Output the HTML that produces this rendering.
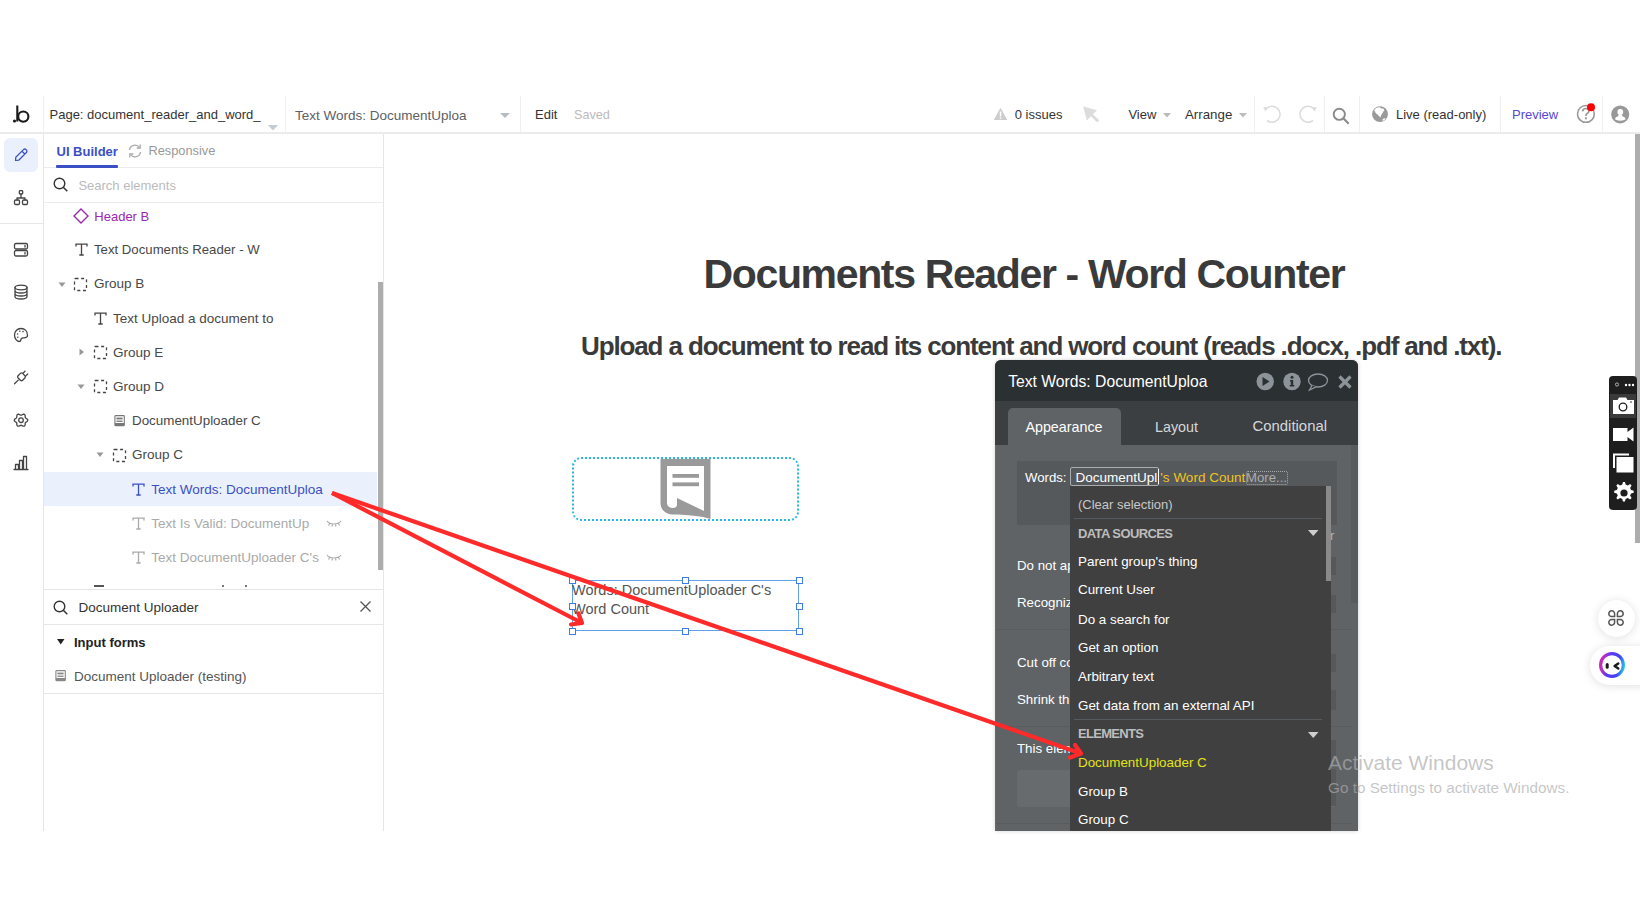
<!DOCTYPE html><html><head><meta charset="utf-8"><style>
html,body{margin:0;padding:0;background:#fff;width:1640px;height:924px;overflow:hidden;position:relative;font-family:"Liberation Sans",sans-serif}
.t{position:absolute;white-space:nowrap}
.r{position:absolute;display:block}
</style></head><body>
<div class="r" style="left:0px;top:132px;width:1640px;height:2px;background:#ebebeb;"></div>
<div class="r" style="left:43px;top:96px;width:1px;height:36px;background:#eef0f3;"></div>
<div class="r" style="left:285px;top:96px;width:1px;height:36px;background:#eef0f3;"></div>
<div class="r" style="left:520px;top:96px;width:1px;height:36px;background:#eef0f3;"></div>
<div class="r" style="left:1254px;top:96px;width:1px;height:36px;background:#eef0f3;"></div>
<div class="r" style="left:1324px;top:96px;width:1px;height:36px;background:#eef0f3;"></div>
<div class="r" style="left:1359px;top:96px;width:1px;height:36px;background:#eef0f3;"></div>
<div class="r" style="left:1500px;top:96px;width:1px;height:36px;background:#eef0f3;"></div>
<div class="r" style="left:1602px;top:96px;width:1px;height:36px;background:#eef0f3;"></div>
<svg class="r" style="left:10px;top:102px;" width="24" height="24" viewBox="0 0 24 24"><circle cx="4.5" cy="19" r="1.6" fill="#1a1a1a"/><path d="M7.3 3.5 V19.5" stroke="#1a1a1a" stroke-width="2.1"/><circle cx="13.3" cy="14.6" r="5.1" fill="none" stroke="#1a1a1a" stroke-width="2.1"/></svg>
<div class="t" style="left:49.5px;top:108.19px;font-size:13px;line-height:13px;color:#333;font-weight:400;letter-spacing:0px;">Page: document_reader_and_word_</div>
<svg class="r" style="left:268px;top:125px;" width="10" height="6" viewBox="0 0 10 6"><path d="M0 0 H10 L5 5.5Z" fill="#c3cbd3"/></svg>
<div class="t" style="left:295px;top:108.97px;font-size:13.5px;line-height:13.5px;color:#5d6165;font-weight:400;letter-spacing:0px;">Text Words: DocumentUploa</div>
<svg class="r" style="left:500px;top:113px;" width="10" height="6" viewBox="0 0 10 6"><path d="M0 0 H10 L5 5Z" fill="#b5bcc4"/></svg>
<div class="t" style="left:535px;top:108.49px;font-size:13px;line-height:13px;color:#333;font-weight:400;letter-spacing:0px;">Edit</div>
<div class="t" style="left:574px;top:108.83px;font-size:12.6px;line-height:12.6px;color:#bbb;font-weight:400;letter-spacing:0px;">Saved</div>
<svg class="r" style="left:993px;top:107px;" width="15" height="14" viewBox="0 0 15 14"><path d="M7.5 0.8 L14.3 13 H0.7Z" fill="#cdcdcd"/><rect x="6.8" y="4.5" width="1.5" height="5" fill="#fff"/><rect x="6.8" y="10.5" width="1.5" height="1.5" fill="#fff"/></svg>
<div class="t" style="left:1014.7px;top:108.29px;font-size:13px;line-height:13px;color:#333;font-weight:400;letter-spacing:0px;">0 issues</div>
<svg class="r" style="left:1083px;top:106px;" width="17" height="17" viewBox="0 0 17 17"><path d="M0.5 0.8 L13.6 4.6 L9.6 8.3 L15.9 14.3 L14 16.1 L7.8 10 L4 14 Z" fill="#dcdcdc" stroke="#dcdcdc" stroke-width="0.6" stroke-linejoin="round"/></svg>
<div class="t" style="left:1128.4px;top:108.29px;font-size:13px;line-height:13px;color:#333;font-weight:400;letter-spacing:0px;">View</div>
<svg class="r" style="left:1163px;top:113px;" width="8" height="5" viewBox="0 0 8 5"><path d="M0 0 H8 L4 4.5Z" fill="#bbb"/></svg>
<div class="t" style="left:1185px;top:108.04px;font-size:13.3px;line-height:13.3px;color:#333;font-weight:400;letter-spacing:0px;">Arrange</div>
<svg class="r" style="left:1239px;top:113px;" width="8" height="5" viewBox="0 0 8 5"><path d="M0 0 H8 L4 4.5Z" fill="#bbb"/></svg>
<svg class="r" style="left:1262px;top:104px;" width="22" height="20" viewBox="0 0 22 20"><path d="M3.96 4.95 A8 8 0 1 1 5.07 16.5" fill="none" stroke="#dcdcdc" stroke-width="1.6"/><path d="M1.2 3 L6.2 3.6 L3.4 7.6Z" fill="#dcdcdc"/></svg>
<svg class="r" style="left:1296px;top:104px;" width="22" height="20" viewBox="0 0 22 20"><path d="M18.04 4.95 A8 8 0 1 0 16.93 16.5" fill="none" stroke="#dcdcdc" stroke-width="1.6"/><path d="M20.8 3 L15.8 3.6 L18.6 7.6Z" fill="#dcdcdc"/></svg>
<svg class="r" style="left:1332px;top:106.5px;" width="19" height="18" viewBox="0 0 19 18"><circle cx="7.3" cy="7.3" r="5.6" fill="none" stroke="#8a8a8a" stroke-width="1.9"/><path d="M11.3 11.3 L16.7 16.7" stroke="#8a8a8a" stroke-width="2.1"/></svg>
<svg class="r" style="left:1371px;top:105px;" width="18" height="18" viewBox="0 0 18 18"><circle cx="9" cy="9.2" r="7.9" fill="#9a9a9a"/><path d="M3.2 5 C4.5 3 6.5 2 9 2.2 C9.6 3.2 10.5 4 11 3.2 C12.5 3.5 13.3 4.5 13.4 5.2 C12.5 6 12 7.5 11.2 8.5 C10.5 9.5 9.8 11 9.5 12.5 C8.5 11.5 7.5 10.5 6.5 9.5 C5 8.5 3.8 7 3.2 5Z M11.5 14.5 C12.5 13.3 13.8 13 14.5 13.5 C14 14.5 13 15.5 11.8 16 Z" fill="#fff"/></svg>
<div class="t" style="left:1396px;top:108.29px;font-size:13px;line-height:13px;color:#333;font-weight:400;letter-spacing:0px;">Live (read-only)</div>
<div class="t" style="left:1512px;top:108.29px;font-size:13px;line-height:13px;color:#5548d9;font-weight:400;letter-spacing:0px;">Preview</div>
<svg class="r" style="left:1575px;top:102px;" width="24" height="24" viewBox="0 0 24 24"><circle cx="10.9" cy="11.9" r="8.4" fill="none" stroke="#999" stroke-width="1.6"/><path d="M7.6 9.3 C7.8 7.3 9.2 6.5 10.8 6.5 C12.6 6.5 13.9 7.6 13.9 9.1 C13.9 10.6 12.7 11.2 11.8 11.8 C11.1 12.3 10.9 12.8 10.9 14" fill="none" stroke="#999" stroke-width="1.7"/><rect x="9.9" y="15.3" width="2" height="2" fill="#999"/><circle cx="16" cy="5.3" r="4" fill="#ff0000"/></svg>
<svg class="r" style="left:1610px;top:104px;" width="20" height="20" viewBox="0 0 20 20"><circle cx="10.2" cy="10.4" r="9" fill="#999"/><circle cx="10.3" cy="8" r="2.9" fill="#fff"/><path d="M10.3 10 C8.5 10 8.5 11.5 8.2 12.2 C6.5 12.7 5.2 13.5 5 15.3 C6.5 17.2 14 17.2 15.6 15.3 C15.4 13.5 14 12.7 12.4 12.2 C12.1 11.5 12 10 10.3 10Z" fill="#fff"/></svg>
<div class="r" style="left:1635px;top:134px;width:5px;height:409px;background:#adadad;"></div>
<div class="r" style="left:43px;top:134px;width:1px;height:697px;background:#e6e6e6;"></div>
<div class="r" style="left:0px;top:223px;width:43px;height:1px;background:#e6e6e6;"></div>
<div class="r" style="left:4px;top:138px;width:34px;height:34px;background:#eaf1fd;border-radius:6px;"></div>
<svg class="r" style="left:13px;top:147px;" width="16" height="16" viewBox="0 0 16 16"><path d="M2.5 13.5 L2.8 10.3 L10.5 2.6 C11.2 1.9 12.3 1.9 13 2.6 L13.4 3 C14.1 3.7 14.1 4.8 13.4 5.5 L5.7 13.2 Z M9 4.2 L11.8 7" fill="none" stroke="#3b4fc4" stroke-width="1.25" stroke-linejoin="round"/></svg>
<svg class="r" style="left:13px;top:190px;" width="16" height="16" viewBox="0 0 16 16"><rect x="6.3" y="0.6" width="3.4" height="3.4" rx="1.1" fill="none" stroke="#444" stroke-width="1.3" stroke-linecap="round" stroke-linejoin="round"/><path d="M8 3.8 V7 M4 10 V8 H12 V10" fill="none" stroke="#444" stroke-width="1.3" stroke-linecap="round" stroke-linejoin="round"/><rect x="1.5" y="10" width="5" height="4.5" rx="1.2" fill="none" stroke="#444" stroke-width="1.3" stroke-linecap="round" stroke-linejoin="round"/><rect x="9.5" y="10" width="5" height="4.5" rx="1.2" fill="none" stroke="#444" stroke-width="1.3" stroke-linecap="round" stroke-linejoin="round"/></svg>
<svg class="r" style="left:13px;top:242px;" width="16" height="16" viewBox="0 0 16 16"><rect x="1.5" y="1.5" width="13" height="5.5" rx="1.5" fill="none" stroke="#444" stroke-width="1.3" stroke-linecap="round" stroke-linejoin="round"/><rect x="1.5" y="8.5" width="13" height="5.5" rx="1.5" fill="none" stroke="#444" stroke-width="1.3" stroke-linecap="round" stroke-linejoin="round"/><path d="M12 3.5 V5 M12 10.5 V12" fill="none" stroke="#444" stroke-width="1.3" stroke-linecap="round" stroke-linejoin="round"/></svg>
<svg class="r" style="left:13px;top:284px;" width="16" height="16" viewBox="0 0 16 16"><ellipse cx="8" cy="3.5" rx="6" ry="2.3" fill="none" stroke="#444" stroke-width="1.3" stroke-linecap="round" stroke-linejoin="round"/><path d="M2 3.5 V12.5 C2 14 5 15 8 15 C11 15 14 14 14 12.5 V3.5 M2 6.5 C2 8 5 9 8 9 C11 9 14 8 14 6.5 M2 9.5 C2 11 5 12 8 12 C11 12 14 11 14 9.5" fill="none" stroke="#444" stroke-width="1.3" stroke-linecap="round" stroke-linejoin="round"/></svg>
<svg class="r" style="left:13px;top:327px;" width="16" height="16" viewBox="0 0 16 16"><path d="M8 1.5 C4 1.5 1.5 4.5 1.5 8 C1.5 11.5 4 14.5 6.5 14.5 C8 14.5 7.5 12.5 8.5 11.5 C9.5 10.5 14.5 11.5 14.5 8.5 C14.5 4.5 12 1.5 8 1.5Z" fill="none" stroke="#444" stroke-width="1.3" stroke-linecap="round" stroke-linejoin="round"/><circle cx="4.6" cy="7" r="0.8" fill="#444"/><circle cx="6.8" cy="4.3" r="0.8" fill="#444"/><circle cx="10" cy="4.6" r="0.8" fill="#444"/><circle cx="4.8" cy="10.2" r="0.8" fill="#444"/></svg>
<svg class="r" style="left:13px;top:369px;" width="16" height="16" viewBox="0 0 16 16"><path d="M1.5 14.8 L5.2 11.1" fill="none" stroke="#444" stroke-width="1.3" stroke-linecap="round" stroke-linejoin="round"/><rect x="5.3" y="4.6" width="6.4" height="6.4" rx="1.6" transform="rotate(45 8.5 7.8)" fill="none" stroke="#444" stroke-width="1.3" stroke-linecap="round" stroke-linejoin="round"/><path d="M9.9 4.4 L12 2.3 M12.6 7.1 L14.7 5" fill="none" stroke="#444" stroke-width="1.3" stroke-linecap="round" stroke-linejoin="round"/></svg>
<svg class="r" style="left:13px;top:412px;" width="16" height="16" viewBox="0 0 16 16"><path d="M14.75 8.20 L14.61 8.78 L14.23 9.30 L13.70 9.73 L13.14 10.07 L12.68 10.38 L12.37 10.72 L12.23 11.16 L12.19 11.72 L12.17 12.37 L12.07 13.05 L11.81 13.64 L11.38 14.05 L10.80 14.21 L10.16 14.14 L9.53 13.90 L8.95 13.59 L8.45 13.34 L8.00 13.25 L7.55 13.34 L7.05 13.59 L6.47 13.90 L5.84 14.14 L5.20 14.21 L4.63 14.05 L4.19 13.64 L3.93 13.05 L3.83 12.37 L3.81 11.72 L3.77 11.16 L3.63 10.73 L3.32 10.38 L2.86 10.07 L2.30 9.73 L1.77 9.30 L1.39 8.78 L1.25 8.20 L1.39 7.62 L1.77 7.10 L2.30 6.67 L2.86 6.33 L3.32 6.02 L3.63 5.67 L3.77 5.24 L3.81 4.68 L3.83 4.03 L3.93 3.35 L4.19 2.76 L4.62 2.35 L5.20 2.19 L5.84 2.26 L6.47 2.50 L7.05 2.81 L7.55 3.06 L8.00 3.15 L8.45 3.06 L8.95 2.81 L9.53 2.50 L10.16 2.26 L10.80 2.19 L11.37 2.35 L11.81 2.76 L12.07 3.35 L12.17 4.03 L12.19 4.68 L12.23 5.24 L12.37 5.68 L12.68 6.02 L13.14 6.33 L13.70 6.67 L14.23 7.10 L14.61 7.62Z" fill="none" stroke="#444" stroke-width="1.3" stroke-linecap="round" stroke-linejoin="round"/><circle cx="8" cy="8.2" r="2.3" fill="none" stroke="#444" stroke-width="1.3" stroke-linecap="round" stroke-linejoin="round"/></svg>
<svg class="r" style="left:13px;top:455px;" width="16" height="16" viewBox="0 0 16 16"><path d="M1 14.5 H15 M2.5 14.5 V9.5 H5.5 V14.5 M6.5 14.5 V5.5 H9.5 V14.5 M10.5 14.5 V1.5 H13.5 V14.5" fill="none" stroke="#444" stroke-width="1.3" stroke-linecap="round" stroke-linejoin="round"/></svg>
<div class="r" style="left:383px;top:134px;width:1px;height:697px;background:#e6e6e6;"></div>
<div class="r" style="left:44px;top:167px;width:339px;height:1px;background:#ececec;"></div>
<div class="t" style="left:56.5px;top:144.59px;font-size:13px;line-height:13px;color:#3b4fc4;font-weight:700;letter-spacing:0px;">UI Builder</div>
<div class="r" style="left:56px;top:165px;width:62px;height:3px;background:#3b4fc4;border-radius:1px;"></div>
<svg class="r" style="left:127px;top:143px;" width="16" height="16" viewBox="0 0 16 16"><path d="M2.5 7 A5.5 5.5 0 0 1 12.5 4.5 M13.5 9 A5.5 5.5 0 0 1 3.5 11.5" fill="none" stroke="#aaa" stroke-width="1.3"/><path d="M13.2 1.5 V5 H9.7 M2.8 14.5 V11 H6.3" fill="none" stroke="#aaa" stroke-width="1.3"/></svg>
<div class="t" style="left:148.5px;top:144.76px;font-size:12.8px;line-height:12.8px;color:#999;font-weight:400;letter-spacing:0px;">Responsive</div>
<div class="r" style="left:44px;top:202px;width:339px;height:1px;background:#ececec;"></div>
<svg class="r" style="left:53px;top:177px;" width="16" height="16" viewBox="0 0 16 16"><circle cx="6.5" cy="6.5" r="5.3" fill="none" stroke="#333" stroke-width="1.4"/><path d="M10.3 10.3 L14.3 14.3" stroke="#333" stroke-width="1.5"/></svg>
<div class="t" style="left:78.4px;top:178.69px;font-size:13px;line-height:13px;color:#bbb;font-weight:400;letter-spacing:0px;">Search elements</div>
<div class="r" style="left:44px;top:472px;width:333px;height:34px;background:#eaf1fd;"></div>
<svg class="r" style="left:73px;top:208px;" width="16" height="16" viewBox="0 0 16 16"><path d="M8 1 L15 8 L8 15 L1 8Z" fill="none" stroke="#9c27b0" stroke-width="1.4"/></svg>
<div class="t" style="left:94.3px;top:209.59px;font-size:13px;line-height:13px;color:#9c27b0;font-weight:400;letter-spacing:0px;">Header B</div>
<svg class="r" style="left:75px;top:243px;" width="13" height="13" viewBox="0 0 13 13"><path d="M1 3.5 V1.2 H12 V3.5 M6.5 1.2 V12 M4.3 12 H8.7" fill="none" stroke="#444" stroke-width="1.3"/></svg>
<div class="t" style="left:94px;top:243.32px;font-size:13.2px;line-height:13.2px;color:#484848;font-weight:400;letter-spacing:0px;">Text Documents Reader - W</div>
<svg class="r" style="left:57.5px;top:281.5px;" width="8" height="6" viewBox="0 0 8 6"><path d="M0.5 0.5 H7.5 L4 5Z" fill="#999"/></svg>
<svg class="r" style="left:73px;top:277px;" width="15" height="15" viewBox="0 0 15 15"><rect x="1.5" y="1.5" width="12" height="12" rx="1" fill="none" stroke="#444" stroke-width="1.3" stroke-dasharray="3 2.6"/></svg>
<div class="t" style="left:94px;top:277.07px;font-size:13.5px;line-height:13.5px;color:#484848;font-weight:400;letter-spacing:0px;">Group B</div>
<svg class="r" style="left:94px;top:311.5px;" width="13" height="13" viewBox="0 0 13 13"><path d="M1 3.5 V1.2 H12 V3.5 M6.5 1.2 V12 M4.3 12 H8.7" fill="none" stroke="#444" stroke-width="1.3"/></svg>
<div class="t" style="left:113px;top:311.77px;font-size:13.5px;line-height:13.5px;color:#484848;font-weight:400;letter-spacing:0px;">Text Upload a document to</div>
<svg class="r" style="left:78.5px;top:348px;" width="6" height="8" viewBox="0 0 6 8"><path d="M0.5 0.5 V7.5 L5 4Z" fill="#999"/></svg>
<svg class="r" style="left:92.5px;top:345px;" width="15" height="15" viewBox="0 0 15 15"><rect x="1.5" y="1.5" width="12" height="12" rx="1" fill="none" stroke="#444" stroke-width="1.3" stroke-dasharray="3 2.6"/></svg>
<div class="t" style="left:113px;top:345.57px;font-size:13.5px;line-height:13.5px;color:#484848;font-weight:400;letter-spacing:0px;">Group E</div>
<svg class="r" style="left:77px;top:383.5px;" width="8" height="6" viewBox="0 0 8 6"><path d="M0.5 0.5 H7.5 L4 5Z" fill="#999"/></svg>
<svg class="r" style="left:92.5px;top:379px;" width="15" height="15" viewBox="0 0 15 15"><rect x="1.5" y="1.5" width="12" height="12" rx="1" fill="none" stroke="#444" stroke-width="1.3" stroke-dasharray="3 2.6"/></svg>
<div class="t" style="left:113px;top:379.57px;font-size:13.5px;line-height:13.5px;color:#484848;font-weight:400;letter-spacing:0px;">Group D</div>
<svg class="r" style="left:114px;top:415px;" width="12" height="12" viewBox="0 0 12 12"><rect x="0.9" y="0.6" width="9.4" height="10" rx="0.6" fill="none" stroke="#777" stroke-width="1.1"/><rect x="2.4" y="2.6" width="6.2" height="1.8" fill="#777"/><rect x="2.4" y="5.6" width="6.2" height="1.3" fill="#777"/><rect x="1" y="8" width="9.2" height="2.6" fill="#777"/></svg>
<div class="t" style="left:132px;top:413.85px;font-size:13.4px;line-height:13.4px;color:#484848;font-weight:400;letter-spacing:0px;">DocumentUploader C</div>
<svg class="r" style="left:96px;top:451.5px;" width="8" height="6" viewBox="0 0 8 6"><path d="M0.5 0.5 H7.5 L4 5Z" fill="#999"/></svg>
<svg class="r" style="left:112px;top:447.5px;" width="15" height="15" viewBox="0 0 15 15"><rect x="1.5" y="1.5" width="12" height="12" rx="1" fill="none" stroke="#444" stroke-width="1.3" stroke-dasharray="3 2.6"/></svg>
<div class="t" style="left:132px;top:447.87px;font-size:13.5px;line-height:13.5px;color:#484848;font-weight:400;letter-spacing:0px;">Group C</div>
<svg class="r" style="left:132px;top:482.5px;" width="13" height="13" viewBox="0 0 13 13"><path d="M1 3.5 V1.2 H12 V3.5 M6.5 1.2 V12 M4.3 12 H8.7" fill="none" stroke="#3b4fc4" stroke-width="1.3"/></svg>
<div class="t" style="left:151.3px;top:482.57px;font-size:13.5px;line-height:13.5px;color:#3b4fc4;font-weight:400;letter-spacing:0px;">Text Words: DocumentUploa</div>
<svg class="r" style="left:132px;top:516.5px;" width="13" height="13" viewBox="0 0 13 13"><path d="M1 3.5 V1.2 H12 V3.5 M6.5 1.2 V12 M4.3 12 H8.7" fill="none" stroke="#aaa" stroke-width="1.3"/></svg>
<div class="t" style="left:151.3px;top:516.57px;font-size:13.5px;line-height:13.5px;color:#aaa;font-weight:400;letter-spacing:0px;">Text Is Valid: DocumentUp</div>
<svg class="r" style="left:326px;top:519px;" width="16" height="8" viewBox="0 0 16 8"><path d="M1 2 C4 6 12 6 15 2 M3.5 4.5 L2.5 6.5 M6.5 5.5 L6 7.5 M9.5 5.5 L10 7.5 M12.5 4.5 L13.5 6.5" fill="none" stroke="#aaa" stroke-width="1.1"/></svg>
<svg class="r" style="left:132px;top:550.5px;" width="13" height="13" viewBox="0 0 13 13"><path d="M1 3.5 V1.2 H12 V3.5 M6.5 1.2 V12 M4.3 12 H8.7" fill="none" stroke="#aaa" stroke-width="1.3"/></svg>
<div class="t" style="left:151.3px;top:550.57px;font-size:13.5px;line-height:13.5px;color:#aaa;font-weight:400;letter-spacing:0px;">Text DocumentUploader C&#39;s</div>
<svg class="r" style="left:326px;top:553px;" width="16" height="8" viewBox="0 0 16 8"><path d="M1 2 C4 6 12 6 15 2 M3.5 4.5 L2.5 6.5 M6.5 5.5 L6 7.5 M9.5 5.5 L10 7.5 M12.5 4.5 L13.5 6.5" fill="none" stroke="#aaa" stroke-width="1.1"/></svg>
<div class="r" style="left:94px;top:585px;width:10px;height:2px;background:#555;"></div>
<div class="r" style="left:222px;top:585px;width:1.5px;height:2px;background:#777;"></div>
<div class="r" style="left:245px;top:585px;width:1.5px;height:2px;background:#777;"></div>
<div class="r" style="left:378px;top:282px;width:5px;height:288px;background:#adadad;"></div>
<div class="r" style="left:44px;top:589px;width:339px;height:1px;background:#e6e6e6;"></div>
<svg class="r" style="left:53px;top:600px;" width="16" height="16" viewBox="0 0 16 16"><circle cx="6.5" cy="6.5" r="5.3" fill="none" stroke="#333" stroke-width="1.4"/><path d="M10.3 10.3 L14.3 14.3" stroke="#333" stroke-width="1.5"/></svg>
<div class="t" style="left:78.4px;top:600.97px;font-size:13.5px;line-height:13.5px;color:#333;font-weight:400;letter-spacing:0px;">Document Uploader</div>
<svg class="r" style="left:359px;top:600px;" width="13" height="13" viewBox="0 0 13 13"><path d="M1.5 1.5 L11.5 11.5 M11.5 1.5 L1.5 11.5" stroke="#555" stroke-width="1.3"/></svg>
<div class="r" style="left:44px;top:624px;width:339px;height:1px;background:#e6e6e6;"></div>
<svg class="r" style="left:57px;top:639px;" width="8" height="6" viewBox="0 0 8 6"><path d="M0 0 H7.5 L3.75 5.5Z" fill="#222"/></svg>
<div class="t" style="left:74px;top:636.49px;font-size:13px;line-height:13px;color:#222;font-weight:700;letter-spacing:0px;">Input forms</div>
<svg class="r" style="left:55px;top:670px;" width="12" height="12" viewBox="0 0 12 12"><rect x="0.9" y="0.6" width="9.4" height="10" rx="0.6" fill="none" stroke="#888" stroke-width="1.1"/><rect x="2.4" y="2.6" width="6.2" height="1.8" fill="#888"/><rect x="2.4" y="5.6" width="6.2" height="1.3" fill="#888"/><rect x="1" y="8" width="9.2" height="2.6" fill="#888"/></svg>
<div class="t" style="left:74px;top:670.17px;font-size:13.5px;line-height:13.5px;color:#555;font-weight:400;letter-spacing:0px;">Document Uploader (testing)</div>
<div class="r" style="left:44px;top:693px;width:339px;height:1px;background:#e6e6e6;"></div>
<div class="t" style="left:703.5px;top:254.29px;font-size:41px;line-height:41px;color:#3a3a3a;font-weight:700;letter-spacing:-1.35px;">Documents Reader - Word Counter</div>
<div class="t" style="left:581px;top:332.79px;font-size:26px;line-height:26px;color:#3a3a3a;font-weight:700;letter-spacing:-1.125px;">Upload a document to read its content and word count (reads .docx, .pdf and .txt).</div>
<div class="r" style="left:572px;top:457px;width:227px;height:64px;background:transparent;box-sizing:border-box;border:2px dotted #29b6e0;border-radius:9px;"></div>
<svg class="r" style="left:659px;top:458px;" width="54" height="62" viewBox="0 0 54 62"><path d="M1.5 1 H51.5 V61 L44 59 C30 57 20 56.5 14 56.5 C7 56.5 1.5 52 1.5 45Z" fill="#9a9a9a"/><path d="M8 8 H45 V53 L18 40 V47 C18 51 9 51 8 46Z" fill="#fff"/><rect x="13.5" y="16" width="26.5" height="3.8" fill="#9a9a9a"/><rect x="13.5" y="24.4" width="26.5" height="3.8" fill="#9a9a9a"/></svg>
<div class="r" style="left:572px;top:580px;width:227px;height:51px;background:transparent;box-sizing:border-box;border:1px solid #62a0ea;"></div>
<div class="t" style="left:572px;top:583.42px;font-size:14.5px;line-height:14.5px;color:#555;font-weight:400;letter-spacing:0px;">Words: DocumentUploader C&#39;s</div>
<div class="t" style="left:572px;top:601.72px;font-size:14.5px;line-height:14.5px;color:#555;font-weight:400;letter-spacing:0px;">Word Count</div>
<div class="r" style="left:568.5px;top:576.5px;width:7px;height:7px;background:#fff;box-sizing:border-box;border:1.3px solid #3d7de8;"></div>
<div class="r" style="left:568.5px;top:627.5px;width:7px;height:7px;background:#fff;box-sizing:border-box;border:1.3px solid #3d7de8;"></div>
<div class="r" style="left:682.0px;top:576.5px;width:7px;height:7px;background:#fff;box-sizing:border-box;border:1.3px solid #3d7de8;"></div>
<div class="r" style="left:682.0px;top:627.5px;width:7px;height:7px;background:#fff;box-sizing:border-box;border:1.3px solid #3d7de8;"></div>
<div class="r" style="left:795.5px;top:576.5px;width:7px;height:7px;background:#fff;box-sizing:border-box;border:1.3px solid #3d7de8;"></div>
<div class="r" style="left:795.5px;top:627.5px;width:7px;height:7px;background:#fff;box-sizing:border-box;border:1.3px solid #3d7de8;"></div>
<div class="r" style="left:568.5px;top:602.5px;width:7px;height:7px;background:#fff;box-sizing:border-box;border:1.3px solid #3d7de8;"></div>
<div class="r" style="left:795.5px;top:602.5px;width:7px;height:7px;background:#fff;box-sizing:border-box;border:1.3px solid #3d7de8;"></div>
<div class="r" style="left:995px;top:360px;width:363px;height:471px;background:#5f6366;border-radius:6px 6px 0 0;overflow:hidden;box-shadow:0 0 4px rgba(0,0,0,0.18)">
<div class="r" style="left:0px;top:0px;width:363px;height:41px;background:#2b3033;"></div>
<div class="r" style="left:0px;top:41px;width:363px;height:44px;background:#3b3f42;"></div>
<div class="r" style="left:13px;top:48px;width:113px;height:37px;background:#5f6366;border-radius:5px 5px 0 0;"></div>
<div class="r" style="left:356px;top:85px;width:7px;height:158px;background:#575b5e;"></div>
<div class="r" style="left:22px;top:101px;width:320px;height:64px;background:#55595c;"></div>
</div>
<div class="t" style="left:1008.2px;top:373.71px;font-size:15.7px;line-height:15.7px;color:#fff;font-weight:400;letter-spacing:0px;">Text Words: DocumentUploa</div>
<svg class="r" style="left:1256px;top:372px;" width="19" height="19" viewBox="0 0 19 19"><circle cx="9.2" cy="9.5" r="8.7" fill="#8c9399"/><path d="M6.5 5 L13.5 9.5 L6.5 14Z" fill="#2b3033"/></svg>
<svg class="r" style="left:1283px;top:372px;" width="19" height="19" viewBox="0 0 19 19"><circle cx="9" cy="9.5" r="8.7" fill="#8c9399"/><circle cx="9" cy="5.3" r="1.5" fill="#2b3033"/><path d="M7 8 H10.2 V13 H11.3 V14.5 H6.7 V13 H7.8 V9.5 H7Z" fill="#2b3033"/></svg>
<svg class="r" style="left:1307px;top:372px;" width="22" height="20" viewBox="0 0 22 20"><ellipse cx="11" cy="8.5" rx="9.5" ry="6.5" fill="none" stroke="#8c9399" stroke-width="1.3"/><path d="M5 13.5 L2.5 18 L9 14.8" fill="#2b3033" stroke="#8c9399" stroke-width="1.3"/></svg>
<svg class="r" style="left:1337px;top:374px;" width="16" height="16" viewBox="0 0 16 16"><path d="M2.5 2.5 L13.5 13.5 M13.5 2.5 L2.5 13.5" stroke="#8c9399" stroke-width="3.2"/></svg>
<div class="t" style="left:1025.4px;top:419.59px;font-size:14.3px;line-height:14.3px;color:#fff;font-weight:400;letter-spacing:0px;">Appearance</div>
<div class="t" style="left:1155px;top:419.59px;font-size:14.3px;line-height:14.3px;color:#d5d7d9;font-weight:400;letter-spacing:0px;">Layout</div>
<div class="t" style="left:1252.5px;top:418.78px;font-size:14.9px;line-height:14.9px;color:#d5d7d9;font-weight:400;letter-spacing:0px;">Conditional</div>
<div class="t" style="left:1025px;top:470.62px;font-size:13.2px;line-height:13.2px;color:#fff;font-weight:400;letter-spacing:0px;">Words:</div>
<div class="r" style="left:1070px;top:467px;width:89px;height:19px;background:transparent;box-sizing:border-box;border:1px solid #a9adb0;border-radius:2px;"></div>
<div class="t" style="left:1075.5px;top:470.57px;font-size:13.5px;line-height:13.5px;color:#fff;font-weight:400;letter-spacing:0px;">DocumentUpl</div>
<div class="r" style="left:1157.5px;top:469px;width:1px;height:15px;background:#fff;"></div>
<div class="t" style="left:1160.3px;top:470.57px;font-size:13.5px;line-height:13.5px;color:#f2c31c;font-weight:400;letter-spacing:0px;">&#39;s Word Count</div>
<div class="r" style="left:1246px;top:470.5px;width:42px;height:14px;background:transparent;box-sizing:border-box;border:1px dotted #aaa;border-radius:2px;"></div>
<div class="t" style="left:1246px;top:470.82px;font-size:13.2px;line-height:13.2px;color:#a9adb0;font-weight:400;letter-spacing:0px;">More...</div>
<div class="t" style="left:1017px;top:559.24px;font-size:13.3px;line-height:13.3px;color:#fff;font-weight:400;letter-spacing:0px;">Do not ap</div>
<div class="t" style="left:1017px;top:596.44px;font-size:13.3px;line-height:13.3px;color:#fff;font-weight:400;letter-spacing:0px;">Recogniz</div>
<div class="r" style="left:995px;top:629px;width:356px;height:1px;background:#585c5f;"></div>
<div class="t" style="left:1017px;top:656.24px;font-size:13.3px;line-height:13.3px;color:#fff;font-weight:400;letter-spacing:0px;">Cut off co</div>
<div class="t" style="left:1017px;top:693.44px;font-size:13.3px;line-height:13.3px;color:#fff;font-weight:400;letter-spacing:0px;">Shrink th</div>
<div class="t" style="left:1017px;top:741.74px;font-size:13.3px;line-height:13.3px;color:#fff;font-weight:400;letter-spacing:0px;">This elem</div>
<div class="r" style="left:1017px;top:770px;width:319px;height:37px;background:#676b6e;border-radius:3px;"></div>
<div class="r" style="left:995px;top:823px;width:356px;height:1px;background:#585c5f;"></div>
<div class="r" style="left:995px;top:445px;width:1px;height:386px;background:#66696c;"></div>
<div class="t" style="left:1330px;top:528.99px;font-size:13px;line-height:13px;color:#aeb2b5;font-weight:400;letter-spacing:0px;">r</div>
<div class="r" style="left:1331px;top:557px;width:5px;height:18px;background:#55595c;"></div>
<div class="r" style="left:1331px;top:595px;width:5px;height:18px;background:#55595c;"></div>
<div class="r" style="left:1331px;top:654px;width:5px;height:18px;background:#55595c;"></div>
<div class="r" style="left:1331px;top:690px;width:5px;height:20px;background:#55595c;"></div>
<div class="r" style="left:1331px;top:740px;width:5px;height:20px;background:#55595c;"></div>
<div class="r" style="left:1331px;top:769px;width:5px;height:37px;background:#55595c;"></div>
<div class="r" style="left:995px;top:726px;width:356px;height:1px;background:#585c5f;"></div>
<div class="r" style="left:1070px;top:486px;width:261px;height:345px;background:#404040;"></div>
<div class="r" style="left:1326px;top:486px;width:5px;height:95px;background:#8a8a8a;"></div>
<div class="t" style="left:1078px;top:497.99px;font-size:13px;line-height:13px;color:#c8c8c8;font-weight:400;letter-spacing:0px;">(Clear selection)</div>
<div class="r" style="left:1074px;top:518px;width:248px;height:1px;background:#555a5e;"></div>
<div class="t" style="left:1078px;top:526.59px;font-size:13px;line-height:13px;color:#bdbdbd;font-weight:700;letter-spacing:-0.6px;">DATA SOURCES</div>
<svg class="r" style="left:1308px;top:530px;" width="11" height="7" viewBox="0 0 11 7"><path d="M0 0 H10.5 L5.25 6Z" fill="#cfcfcf"/></svg>
<div class="t" style="left:1078px;top:555.25px;font-size:13.4px;line-height:13.4px;color:#fff;font-weight:400;letter-spacing:0px;">Parent group&#39;s thing</div>
<div class="t" style="left:1078px;top:583.45px;font-size:13.4px;line-height:13.4px;color:#fff;font-weight:400;letter-spacing:0px;">Current User</div>
<div class="t" style="left:1078px;top:612.65px;font-size:13.4px;line-height:13.4px;color:#fff;font-weight:400;letter-spacing:0px;">Do a search for</div>
<div class="t" style="left:1078px;top:641.45px;font-size:13.4px;line-height:13.4px;color:#fff;font-weight:400;letter-spacing:0px;">Get an option</div>
<div class="t" style="left:1078px;top:669.65px;font-size:13.4px;line-height:13.4px;color:#fff;font-weight:400;letter-spacing:0px;">Arbitrary text</div>
<div class="t" style="left:1078px;top:698.55px;font-size:13.4px;line-height:13.4px;color:#fff;font-weight:400;letter-spacing:0px;">Get data from an external API</div>
<div class="r" style="left:1074px;top:719px;width:248px;height:1px;background:#555a5e;"></div>
<div class="t" style="left:1078px;top:727.49px;font-size:13px;line-height:13px;color:#bdbdbd;font-weight:700;letter-spacing:-0.7px;">ELEMENTS</div>
<svg class="r" style="left:1308px;top:732px;" width="11" height="7" viewBox="0 0 11 7"><path d="M0 0 H10.5 L5.25 6Z" fill="#cfcfcf"/></svg>
<div class="t" style="left:1078px;top:755.85px;font-size:13.4px;line-height:13.4px;color:#e3e31a;font-weight:400;letter-spacing:0px;">DocumentUploader C</div>
<div class="t" style="left:1078px;top:784.65px;font-size:13.4px;line-height:13.4px;color:#fff;font-weight:400;letter-spacing:0px;">Group B</div>
<div class="t" style="left:1078px;top:813.35px;font-size:13.4px;line-height:13.4px;color:#fff;font-weight:400;letter-spacing:0px;">Group C</div>
<div class="t" style="left:1328px;top:751.52px;font-size:21px;line-height:21px;color:rgba(172,172,172,0.69);font-weight:400;letter-spacing:0px;">Activate Windows</div>
<div class="t" style="left:1328px;top:779.65px;font-size:15.3px;line-height:15.3px;color:rgba(172,172,172,0.69);font-weight:400;letter-spacing:0px;">Go to Settings to activate Windows.</div>
<svg class="r" style="left:0;top:0" width="1640" height="924">
<path d="M332 493 L582 623" stroke="#ff2a2a" stroke-width="4.2" stroke-linecap="butt" fill="none"/>
<path d="M578.5 613.5 L582 623 L571 624.5" stroke="#ff2a2a" stroke-width="4.2" stroke-linecap="round" stroke-linejoin="round" fill="none"/>
<path d="M332 493 L1081 753.5" stroke="#ff2a2a" stroke-width="4.2" stroke-linecap="butt" fill="none"/>
<path d="M1075 745 L1081 753.5 L1070 757.5" stroke="#ff2a2a" stroke-width="4.2" stroke-linecap="round" stroke-linejoin="round" fill="none"/>
</svg>
<div class="r" style="left:1609px;top:376px;width:28px;height:134px;background:#1e1e1e;border-radius:4px;"></div>
<div class="r" style="left:1610px;top:394px;width:26px;height:24px;background:#3a3a3a;"></div>
<svg class="r" style="left:1609px;top:376px;" width="28" height="134" viewBox="0 0 28 134"><circle cx="8" cy="8.5" r="1.6" fill="none" stroke="#ccc" stroke-width="0.8"/><circle cx="17" cy="9" r="1.2" fill="#fff"/><circle cx="20.5" cy="9" r="1.2" fill="#fff"/><circle cx="24" cy="9" r="1.2" fill="#fff"/><path d="M4 24 H8.5 L10 21.5 H17 L18.5 24 H25 V38 H4Z" fill="#fff"/><circle cx="14" cy="31" r="3.8" fill="none" stroke="#1e1e1e" stroke-width="1.3"/><circle cx="22" cy="26" r="0.8" fill="#1e1e1e"/><path d="M4 52 H18.5 V56 L24.5 51.5 V65.5 L18.5 61 V65 H4Z" fill="#fff"/><path d="M4 77.5 H20 V79.5 H6 V92 H4Z" fill="#fff"/><rect x="7.5" y="81" width="17" height="15.5" fill="#fff"/><path d="M14 106 l2 0 l0.6 2.6 l2.2 1 l2.3 -1.5 l1.5 1.5 l-1.5 2.3 l1 2.2 l2.6 0.6 v2.1 l-2.6 0.6 l-1 2.2 l1.5 2.3 l-1.5 1.5 l-2.3 -1.5 l-2.2 1 l-0.6 2.6 h-2.1 l-0.6 -2.6 l-2.2 -1 l-2.3 1.5 l-1.5 -1.5 l1.5 -2.3 l-1 -2.2 l-2.6 -0.6 v-2.1 l2.6 -0.6 l1 -2.2 l-1.5 -2.3 l1.5 -1.5 l2.3 1.5 l2.2 -1 z" fill="#fff"/><circle cx="15" cy="117" r="3.6" fill="#1e1e1e"/></svg>
<div class="r" style="left:1597.5px;top:599.5px;width:37px;height:37px;background:#fff;border-radius:50%;box-shadow:0 1px 10px rgba(0,0,0,0.13);"></div>
<svg class="r" style="left:1607px;top:609px;" width="18" height="18" viewBox="0 0 18 18"><g fill="none" stroke="#555" stroke-width="1.5"><path d="M7.6 7.6 H4.8 A2.9 2.9 0 1 1 7.6 4.8Z"/><path d="M10.4 7.6 H13.2 A2.9 2.9 0 1 0 10.4 4.8Z"/><path d="M7.6 10.4 H4.8 A2.9 2.9 0 1 0 7.6 13.2Z"/><path d="M10.4 10.4 H13.2 A2.9 2.9 0 1 1 10.4 13.2Z"/></g></svg>
<div class="r" style="left:1590px;top:645.5px;width:70px;height:39px;background:#fff;border-radius:20px;box-shadow:0 1px 10px rgba(0,0,0,0.13);"></div>
<svg class="r" style="left:1597px;top:651px;" width="28" height="28" viewBox="0 0 28 28"><defs><linearGradient id="g1" x1="0" y1="0.75" x2="1" y2="0.95"><stop offset="0" stop-color="#c42cc0"/><stop offset="0.3" stop-color="#5a3cf0"/><stop offset="0.7" stop-color="#4640f0"/><stop offset="1" stop-color="#22d8e6"/></linearGradient></defs><circle cx="15" cy="14" r="11.4" fill="#fff" stroke="url(#g1)" stroke-width="3.2"/><rect x="8.7" y="12" width="3" height="5.7" rx="1.5" fill="#1a1a1a"/><path d="M21.3 12.4 L17.6 15 L21.3 17.6" fill="none" stroke="#1a1a1a" stroke-width="2.4" stroke-linecap="round" stroke-linejoin="round"/></svg>
</body></html>
